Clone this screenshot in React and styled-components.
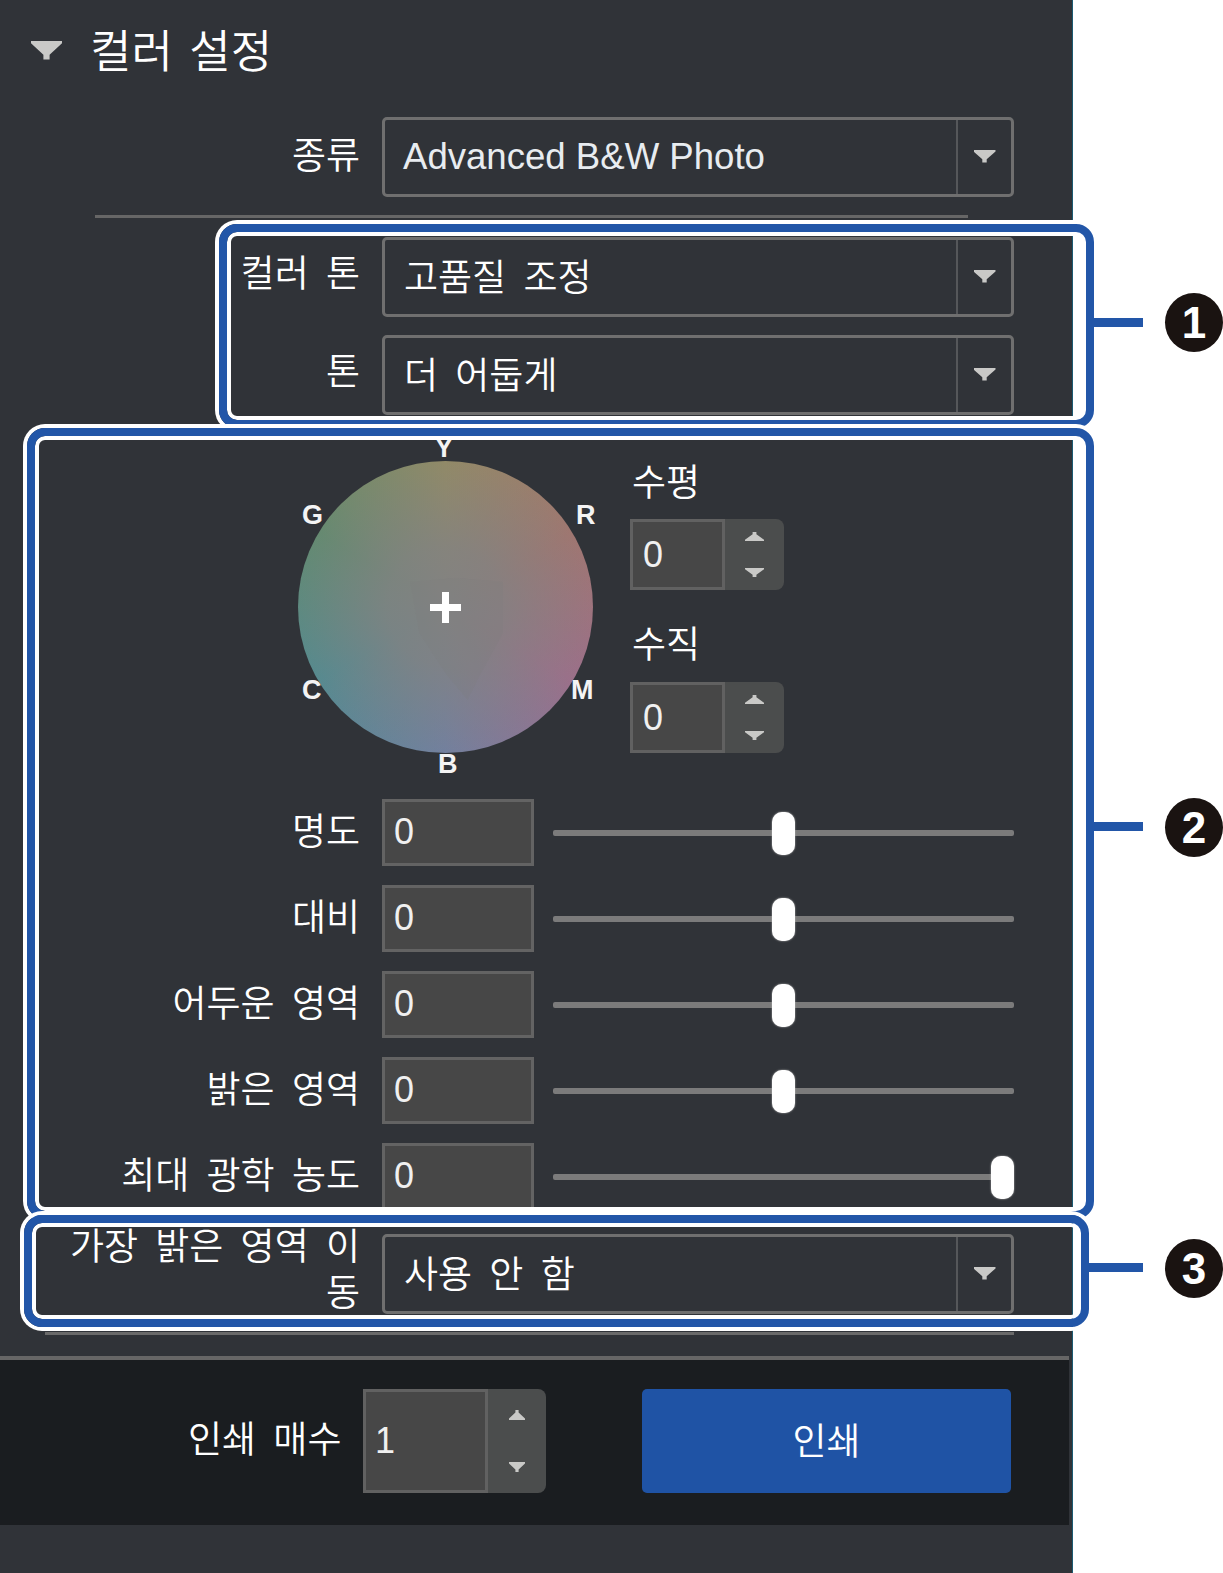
import React from 'react'
import styled, { createGlobalStyle } from 'styled-components'

const Global = createGlobalStyle`
    html, body {
        margin:0;
        padding:0;
        background:#fff;
    }
    body {
        font-family:"Liberation Sans","Noto Sans CJK KR",sans-serif;
    }
`

const Page = styled.div`
    position:relative;
    width:1223px;
    height:1573px;
    overflow:hidden;
    background:#fff;
`

const Panel = styled.div`
    width:1073px;
    height:1573px;
    box-sizing:border-box;
    display:flex;
    flex-direction:column;
    background:#303338;
    border-right:1px solid #1b5a72;
    color:#fff;
    font-size:37px;
    font-weight:350;
    word-spacing:7px;
    line-height:46px;
`

const Header = styled.div`
    height:117px;
    flex:none;
    display:flex;
    align-items:center;
    padding:0 0 12px 31px;
    box-sizing:border-box;
    gap:28px;
    font-size:45px;
    word-spacing:4px;
`

const Arrow = styled.span`
    display:block;
    flex:none;
    width:${p => p.$w}px;
    height:${p => p.$h}px;
    margin-bottom:${p => p.$lift || 0}px;
    background:#c9c9c7;
    clip-path:${p => p.$up
        ? 'polygon(40% 0, 60% 0, 60% 25%, 100% 85%, 100% 100%, 0 100%, 0 85%, 40% 25%)'
        : 'polygon(0 0, 100% 0, 100% 15%, 60% 75%, 60% 100%, 40% 100%, 40% 75%, 0 15%)'};
`

const Row = styled.div`
    flex:none;
    display:grid;
    grid-template-columns:360px 1fr;
    column-gap:22px;
    align-items:center;
    width:1014px;
    height:80px;
    margin-top:${p => p.$top || 0}px;
`

const Label = styled.div`
    text-align:right;
    white-space:${p => p.$wrap ? 'normal' : 'nowrap'};
    word-break:${p => p.$wrap ? 'break-all' : 'normal'};
    padding-left:${p => p.$wrap ? 60 : 0}px;
    margin-top:${p => p.$shift || 0}px;
`

const Select = styled.div`
    height:80px;
    box-sizing:border-box;
    display:flex;
    align-items:stretch;
    border:3px solid #6f6f6f;
    border-radius:5px;
`

const SelectValue = styled.div`
    flex:1;
    display:flex;
    align-items:center;
    padding-left:${p => p.$latin ? 18 : 19}px;
    padding-top:${p => p.$latin ? 0 : 4}px;
    color:${p => p.$latin ? '#e8ecf0' : '#fff'};
    font-size:${p => p.$latin ? 36.6 : 37}px;
    word-spacing:${p => p.$latin ? 0 : 7}px;
`

const SelectButton = styled.div`
    width:55px;
    display:flex;
    align-items:center;
    justify-content:center;
    padding-bottom:2px;
    box-sizing:border-box;
    border-left:2px solid #55575a;
`

const Divider = styled.div`
    flex:none;
    height:3px;
    width:873px;
    margin:18px 0 19px 95px;
    background:#666;
`

const WheelBlock = styled.div`
    flex:none;
    display:flex;
    margin:46px 0 46px 298px;
`

const WheelCanvas = styled.div`
    position:relative;
    width:295px;
    height:292px;
    flex:none;
`

const WheelDisc = styled.div`
    position:absolute;
    inset:0;
    border-radius:50%;
    background:
        radial-gradient(circle closest-side, #828282 0%, rgba(130,130,130,0.8) 40%, rgba(130,130,130,0.05) 100%),
        conic-gradient(#928a66 0deg, #a07670 60deg, #9c6f8a 120deg, #72809f 180deg, #558a90 240deg, #648a70 300deg, #928a66 360deg);
`

const WheelShield = styled.div`
    position:absolute;
    left:112px;
    top:117px;
    width:93px;
    height:122px;
    background:#7b7b7b;
    opacity:0.2;
    clip-path:polygon(0 3%, 50% 0, 100% 3%, 100% 45%, 75% 80%, 62% 100%, 40% 80%, 10% 45%);
`

const Cross = styled.div`
    position:absolute;
    left:132px;
    top:131px;
    width:31px;
    height:31px;
    background:
        linear-gradient(#fff, #fff) center / 31px 7px no-repeat,
        linear-gradient(#fff, #fff) center / 7px 31px no-repeat;
`

const WheelLetter = styled.span`
    position:absolute;
    left:${p => p.$x}px;
    top:${p => p.$y}px;
    font-size:27px;
    font-weight:700;
    line-height:27px;
    color:#f4f4f4;
`

const SpinColumn = styled.div`
    margin-left:37px;
    display:flex;
    flex-direction:column;
`

const SpinLabel = styled.div`
    height:46px;
    padding-left:2px;
    margin-top:${p => p.$top}px;
    margin-bottom:${p => p.$bottom}px;
`

const Spin = styled.div`
    display:flex;
    width:${p => p.$inputW + p.$btnW}px;
    height:${p => p.$h}px;
    flex:none;
`

const SpinInput = styled.div`
    width:${p => p.$w}px;
    box-sizing:border-box;
    display:flex;
    align-items:center;
    padding-left:${p => p.$pad}px;
    background:#474747;
    border:3px solid #616161;
    color:#f0f0f0;
    font-size:36px;
`

const SpinButtons = styled.div`
    flex:1;
    display:flex;
    flex-direction:column;
    justify-content:space-between;
    align-items:center;
    box-sizing:border-box;
    padding:${p => p.$pad}px 0;
    background:#4b4d4d;
    border-radius:0 8px 8px 0;
`

const SliderRow = styled.div`
    flex:none;
    display:grid;
    grid-template-columns:360px 152px 458px;
    column-gap:22px;
    align-items:center;
    height:67px;
    margin-bottom:${p => p.$last ? 0 : 19}px;
`

const ValueBox = styled.div`
    height:67px;
    box-sizing:border-box;
    display:flex;
    align-items:center;
    padding:0 0 2px 9px;
    background:#474747;
    border:3px solid #636363;
    color:#f0f0f0;
    font-size:36px;
`

const Track = styled.div`
    position:relative;
    height:6px;
    margin-left:-3px;
    background:#7b7b7b;
    border-radius:2px;
`

const Thumb = styled.div`
    position:absolute;
    top:-18px;
    left:${p => p.$ratio * 438}px;
    width:23px;
    height:43px;
    border-radius:10px;
    background:#fff;
    box-shadow:0 0 2px #bbb;
`

const BottomRule = styled.div`
    flex:none;
    height:3px;
    width:969px;
    margin:21px 0 21px 45px;
    background:#6a6a6a;
`

const Footer = styled.div`
    flex:none;
    height:169px;
    margin-right:3px;
    box-sizing:border-box;
    border-top:4px solid #666;
    background:#1a1d20;
    display:flex;
    align-items:center;
    padding-left:188px;
    padding-bottom:3px;
`

const FooterLabel = styled.div`
    width:153px;
    text-align:right;
    white-space:nowrap;
    margin-right:22px;
`

const PrintButton = styled.div`
    width:369px;
    height:104px;
    margin-left:96px;
    box-sizing:border-box;
    padding-top:4px;
    display:flex;
    align-items:center;
    justify-content:center;
    background:#1f53a5;
    border-radius:5px;
`

const Callout = styled.div`
    position:absolute;
    left:${p => p.$left}px;
    top:${p => p.$top}px;
    width:${p => p.$width}px;
    height:${p => p.$height}px;
    box-sizing:border-box;
    border:8px solid #2256a8;
    border-radius:18px;
    box-shadow:0 0 0 4px #fff, inset 0 0 0 4px #fff;
    z-index:${p => p.$z};
`

const Connector = styled.div`
    position:absolute;
    left:100%;
    top:${p => p.$y}px;
    margin-left:8px;
    width:${p => p.$len}px;
    height:9px;
    background:#2256a8;
`

const Badge = styled.div`
    position:absolute;
    top:${p => p.$y}px;
    left:${p => p.$x}px;
    width:58px;
    height:59px;
    border-radius:50%;
    display:flex;
    align-items:center;
    justify-content:center;
    background:#1a1311;
    color:#fff;
    font-size:44px;
    font-weight:700;
    line-height:1;
`

const SLIDERS = [
    { label: '명도', ratio: 0.5 },
    { label: '대비', ratio: 0.5 },
    { label: '어두운 영역', ratio: 0.5 },
    { label: '밝은 영역', ratio: 0.5 },
    { label: '최대 광학 농도', ratio: 1 },
]

function Dropdown({ value, latin }) {
    return (
        <Select>
            <SelectValue $latin={latin}>{value}</SelectValue>
            <SelectButton><Arrow $w={22} $h={13} /></SelectButton>
        </Select>
    )
}

function Stepper({ value, inputW, btnW, h, pad, arrowPad, arrowW, arrowH }) {
    return (
        <Spin $inputW={inputW} $btnW={btnW} $h={h}>
            <SpinInput $w={inputW} $pad={pad}>{value}</SpinInput>
            <SpinButtons $pad={arrowPad}>
                <Arrow $up $w={arrowW} $h={arrowH} />
                <Arrow $w={arrowW} $h={arrowH} />
            </SpinButtons>
        </Spin>
    )
}

export default function App() {
    return (
        <Page>
            <Global />
            <Panel>
                <Header>
                    <Arrow $w={31} $h={19} $lift={5} />
                    <span>컬러 설정</span>
                </Header>

                <Row>
                    <Label>종류</Label>
                    <Dropdown value="Advanced B&W Photo" latin />
                </Row>
                <Divider />
                <Row>
                    <Label $shift={-5}>컬러 톤</Label>
                    <Dropdown value="고품질 조정" />
                </Row>
                <Row $top={18}>
                    <Label $shift={-5}>톤</Label>
                    <Dropdown value="더 어둡게" />
                </Row>

                <WheelBlock>
                    <WheelCanvas>
                        <WheelDisc />
                        <WheelShield />
                        <Cross />
                        <WheelLetter $x={137} $y={-26}>Y</WheelLetter>
                        <WheelLetter $x={4} $y={41}>G</WheelLetter>
                        <WheelLetter $x={278} $y={41}>R</WheelLetter>
                        <WheelLetter $x={4} $y={216}>C</WheelLetter>
                        <WheelLetter $x={273} $y={216}>M</WheelLetter>
                        <WheelLetter $x={140} $y={290}>B</WheelLetter>
                    </WheelCanvas>
                    <SpinColumn>
                        <SpinLabel $top={0} $bottom={12}>수평</SpinLabel>
                        <Stepper value="0" inputW={95} btnW={59} h={71} pad={10} arrowPad={13} arrowW={19} arrowH={9} />
                        <SpinLabel $top={33} $bottom={13}>수직</SpinLabel>
                        <Stepper value="0" inputW={95} btnW={59} h={71} pad={10} arrowPad={13} arrowW={19} arrowH={9} />
                    </SpinColumn>
                </WheelBlock>

                {SLIDERS.map((s, i) => (
                    <SliderRow key={s.label} $last={i === SLIDERS.length - 1}>
                        <Label>{s.label}</Label>
                        <ValueBox>0</ValueBox>
                        <Track><Thumb $ratio={s.ratio} /></Track>
                    </SliderRow>
                ))}

                <Row $top={21}>
                    <Label $wrap $shift={-6}>가장 밝은 영역 이동</Label>
                    <Dropdown value="사용 안 함" />
                </Row>
                <BottomRule />

                <Footer>
                    <FooterLabel>인쇄 매수</FooterLabel>
                    <Stepper value="1" inputW={125} btnW={58} h={104} pad={9} arrowPad={21} arrowW={16} arrowH={10} />
                    <PrintButton>인쇄</PrintButton>
                </Footer>
            </Panel>

            <Callout $left={219} $top={224} $width={875} $height={204} $z={1}>
                <Connector $y={86} $len={49} />
                <Badge $x={938} $y={61}>1</Badge>
            </Callout>
            <Callout $left={27} $top={428} $width={1067} $height={791} $z={2}>
                <Connector $y={386} $len={49} />
                <Badge $x={1130} $y={362}>2</Badge>
            </Callout>
            <Callout $left={24} $top={1215} $width={1065} $height={112} $z={3}>
                <Connector $y={40} $len={54} />
                <Badge $x={1133} $y={16}>3</Badge>
            </Callout>
        </Page>
    )
}
